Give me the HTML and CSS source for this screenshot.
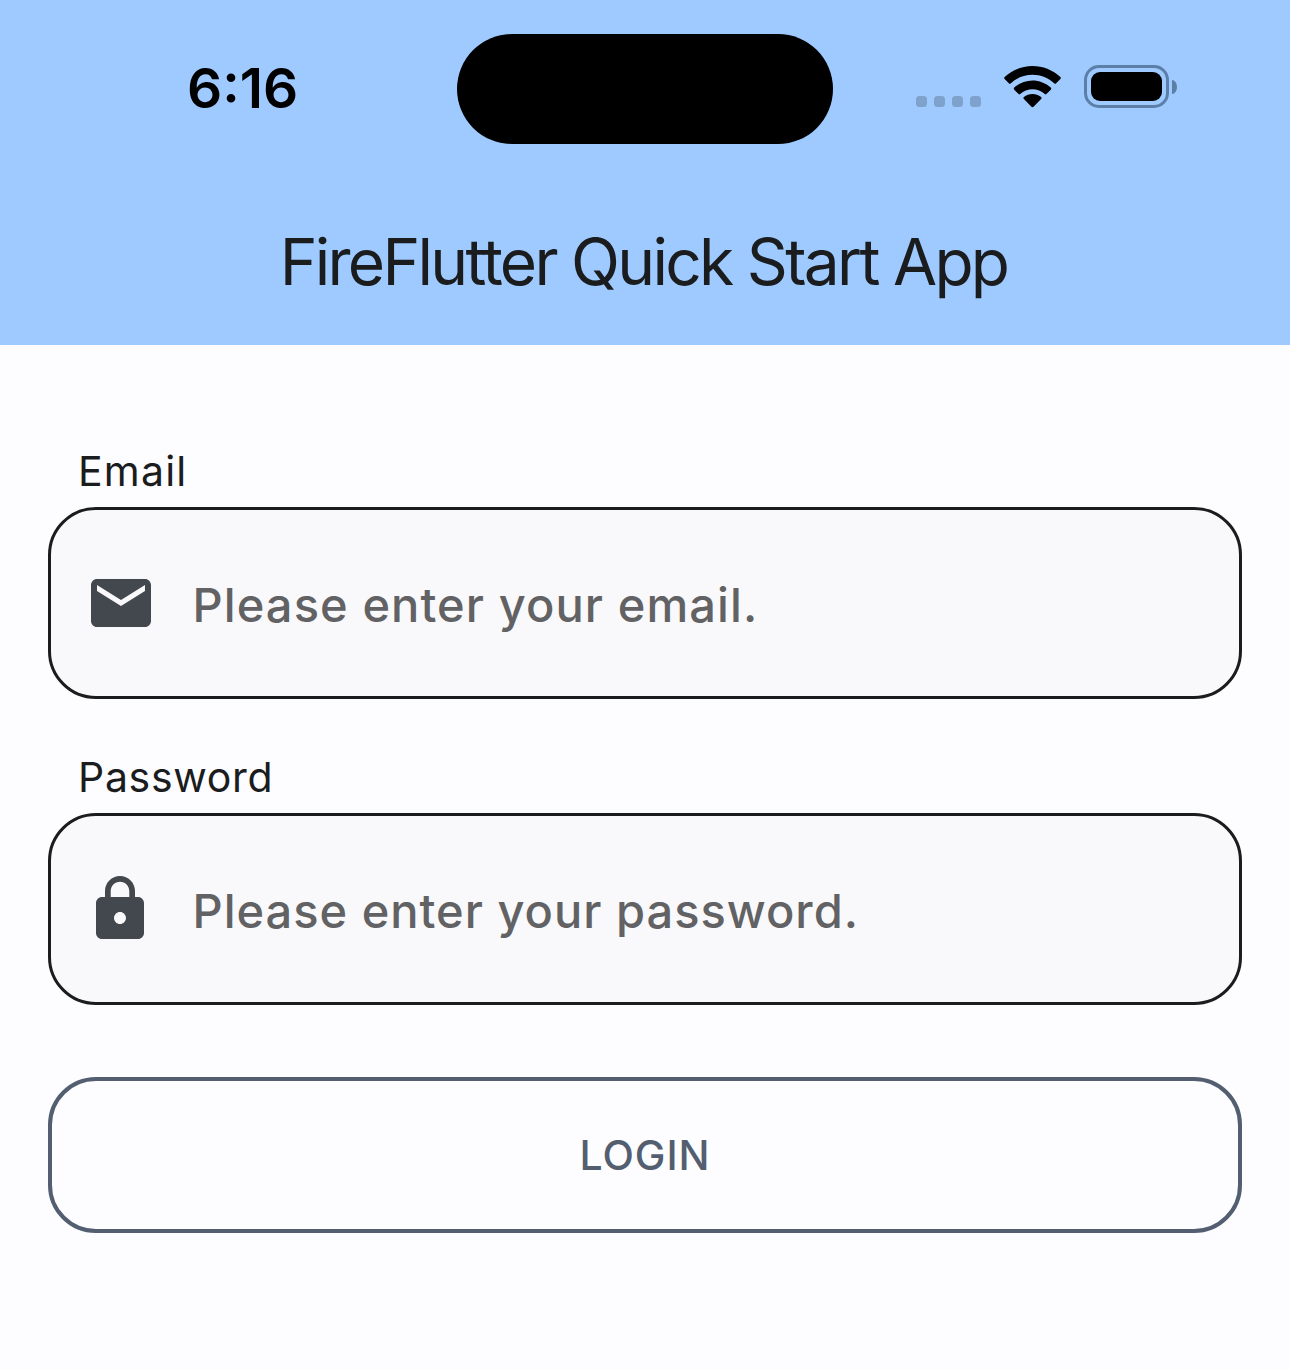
FILE: index.html
```html
<!DOCTYPE html>
<html lang="en">
<head>
<meta charset="utf-8">
<title>FireFlutter Quick Start App</title>
<link rel="stylesheet" href="styles.css">
</head>
<body>
<header class="app-bar">
  <div class="status">
    <div class="status-side"><span class="time">6:16</span></div>
    <div class="island"></div>
    <div class="status-side indicators">
      <div class="dots"><i></i><i></i><i></i><i></i></div>
      <svg class="wifi" width="61" height="44.170" viewBox="0 0 58 42">
        <path d="M29 8.4c7.9 0 15.200 3 20.800 8.200.5.4 1.100.4 1.500 0l4.200-4.200c.6-.6.6-1.400 0-2C48.200 3.700 38.800 0 29 0S9.800 3.700 2.500 10.400c-.6.6-.6 1.400 0 2l4.200 4.200c.4.4 1 .4 1.500 0C13.800 11.400 21.100 8.400 29 8.400z"/>
        <path d="M29 22.200c4.300 0 8.500 1.600 11.700 4.500.5.400 1.100.4 1.500 0l4.200-4.200c.6-.6.6-1.400 0-2C41.600 16.200 35.500 13.700 29 13.700s-12.600 2.500-17.400 6.800c-.6.6-.6 1.400 0 2l4.200 4.200c.4.4 1 .4 1.500 0 3.200-2.900 7.400-4.500 11.700-4.500z"/>
        <path d="M37.200 31.500c.6-.6.6-1.400 0-1.900-4.700-3.900-11.700-3.900-16.400 0-.6.5-.6 1.300 0 1.900l7.200 7.300c.6.600 1.400.600 2 0z"/>
      </svg>
      <div class="battery"><div class="cell"><div class="charge"></div></div><div class="tip"></div></div>
    </div>
  </div>
  <h1 class="title">FireFlutter Quick Start App</h1>
</header>
<main class="form">
  <label class="label label-email" for="email">Email</label>
  <div class="field">
    <svg class="icon" width="72" height="72" viewBox="-0.330 0 24 24"><path d="M20 4H4c-1.100 0-1.990.9-1.990 2L2 18c0 1.100.9 2 2 2h16c1.100 0 2-.9 2-2V6c0-1.100-.9-2-2-2zm0 4l-8 5-8-5V6l8 5 8-5v2z"/></svg>
    <input id="email" class="input" type="email" placeholder="Please enter your email.">
  </div>
  <label class="label" for="password">Password</label>
  <div class="field">
    <svg class="icon" width="72" height="72" viewBox="0 0 24 24"><path d="M18 8h-1V6c0-2.760-2.240-5-5-5S7 3.240 7 6v2H6c-1.100 0-2 .9-2 2v10c0 1.100.9 2 2 2h12c1.100 0 2-.9 2-2V10c0-1.100-.9-2-2-2zm-6 9c-1.100 0-2-.9-2-2s.9-2 2-2 2 .9 2 2-.9 2-2 2zm3.100-9H8.900V6c0-1.710 1.390-3.100 3.100-3.100s3.100 1.390 3.100 3.100v2z"/></svg>
    <input id="password" class="input input-password" type="password" placeholder="Please enter your password.">
  </div>
  <button class="login" type="button">LOGIN</button>
</main>
</body>
</html>
```
FILE: styles.css
```css
* { box-sizing: border-box; }
body { margin: 0; min-height: 1370px; background: #fdfcff; font-family: Inter, sans-serif; color: #1a1c1e; }
.app-bar { height: 345px; background: #9ecaff; }
.status { display: flex; height: 178px; padding: 34px 0 0; }
.status-side { width: 457px; height: 110px; display: flex; align-items: center; }
.time { padding: 0 0 2px 187px; font-size: 55px; font-weight: 600; color: #000; line-height: 108px; }
.island { width: 376px; height: 110px; border-radius: 55px; background: #000; }
.indicators { padding-left: 83px; align-items: flex-start; }
.dots { display: flex; gap: 7px; margin-top: 62px; }
.dots i { width: 11px; height: 11px; border-radius: 3.500px; background: #7ea2cc; }
.wifi { margin: 32px 0 0 21px; }
.battery { display: flex; align-items: center; margin: 31px 0 0 21px; }
.cell { width: 85px; height: 43px; padding: 4px; border: 3px solid #5c7fa8; border-radius: 15px; }
.charge { width: 71px; height: 29px; border-radius: 9px; background: #000; }
.tip { width: 5px; height: 14px; margin-left: 3px; border-radius: 0 5px 5px 0 / 0 7px 7px 0; background: #5c7fa8; }
.title { margin: 0; height: 167px; padding-right: 3px; text-align: center; font-size: 64px; font-weight: 400; line-height: 168px; letter-spacing: -2.700px; }
.form { display: flex; flex-direction: column; padding: 96px 48px 0; }
.label { height: 66px; padding-left: 30px; font-size: 41px; line-height: 61px; letter-spacing: .7px; }
.label-email { letter-spacing: 1.200px; }
.field { display: flex; align-items: center; height: 192px; margin-bottom: 48px; padding-left: 33px; border: 3px solid #1a1c1e; border-radius: 48px; background: #f9f9fb; }
.icon { flex: none; fill: #43474e; }
.input { flex: 1; min-width: 0; margin: 3px 0 0 36.500px; padding: 0; border: 0; outline: 0; background: none; font: 500 47px/72px Inter, sans-serif; letter-spacing: 1.100px; }
.input-password { letter-spacing: 1px; }
.input::placeholder { color: #626264; opacity: 1; }
.login { height: 156px; margin-top: 24px; padding: 0; border: 4px solid #535f70; border-radius: 48px; background: transparent; color: #535f70; font: 500 41px/60px Inter, sans-serif; letter-spacing: .9px; }
```
